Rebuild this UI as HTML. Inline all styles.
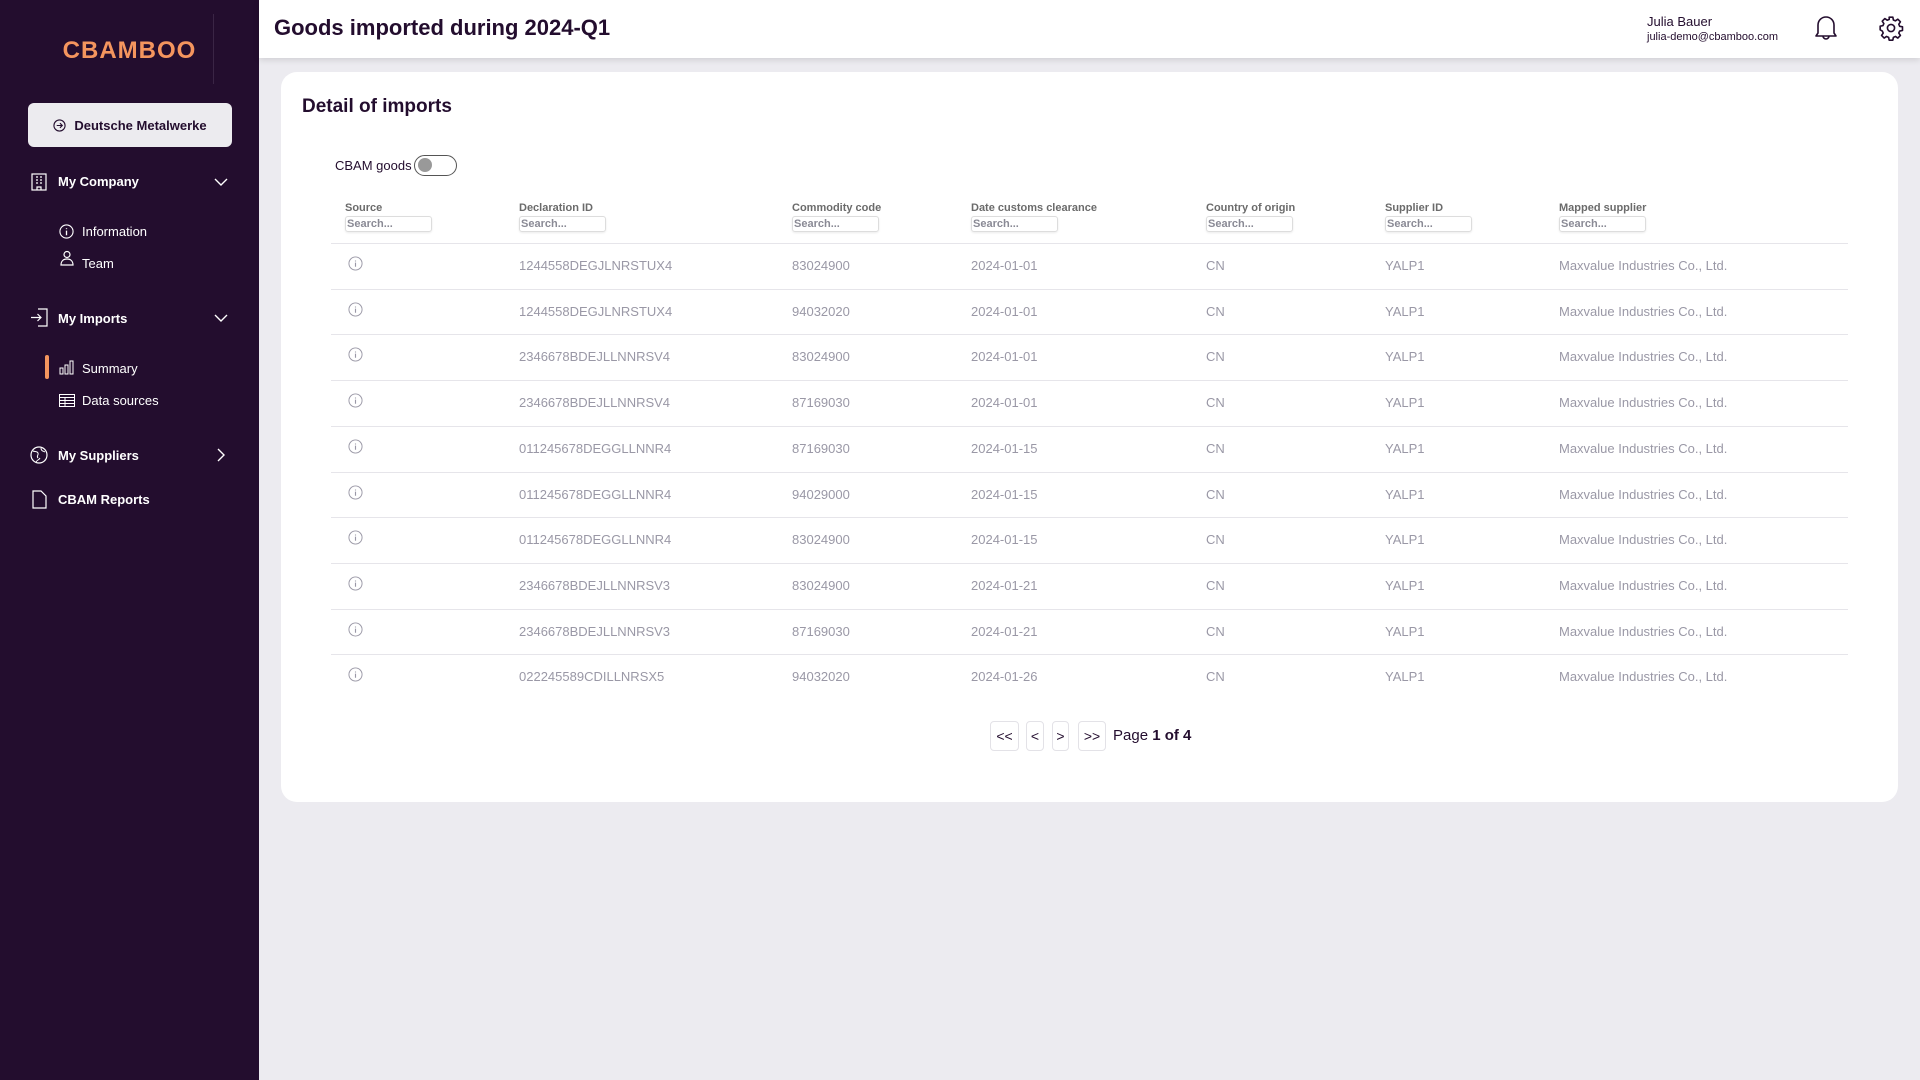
<!DOCTYPE html>
<html><head><meta charset="utf-8"><style>
*{box-sizing:border-box;margin:0;padding:0}
body{width:1920px;height:1080px;overflow:hidden;background:#ecebf0;font-family:"Liberation Sans",sans-serif;position:relative}
.sb{position:absolute;left:0;top:0;width:259px;height:1080px;background:#230d2e;color:#fff}
.logo{position:absolute;left:0;width:259px;top:37px;text-align:center;color:#f4955e;font-size:24px;font-weight:bold;letter-spacing:1px}
.vl{position:absolute;left:213px;top:14px;width:1px;height:70px;background:#3a2545}
.cbtn{position:absolute;left:28px;top:103px;width:204px;height:44px;background:#ecebef;border-radius:6px;color:#230d2e;font-size:13px;font-weight:bold;display:flex;align-items:center;justify-content:center;gap:8px}
.it{position:absolute;font-size:13px;color:#fff;display:flex;align-items:center}
.hdr{position:absolute;left:259px;top:0;right:0;height:58px;background:#fff;box-shadow:0 2px 6px rgba(0,0,0,0.12)}
.title{position:absolute;left:274px;top:15px;font-size:22px;font-weight:bold;color:#230d2e}
.card{position:absolute;left:281px;top:72px;width:1617px;height:730px;background:#fff;border-radius:16px}
.h2{position:absolute;left:302px;top:96px;font-size:19px;font-weight:bold;color:#230d2e}
.th{position:absolute;top:202px;font-size:11px;font-weight:bold;color:#6b6b6b}
.inp{position:absolute;top:216px;width:87px;height:16px;border:1px solid #ddd;border-radius:3px;font-size:11px;color:#8a8a95;font-weight:bold;padding-left:1px;line-height:14px;box-shadow:0 1px 2px rgba(0,0,0,.08)}
.line{position:absolute;left:331px;width:1517px;height:1px;background:#e6e5ea}
.td{position:absolute;font-size:13px;color:#9a98a6}
.pb{position:absolute;top:721px;height:30px;border:1px solid #e3e2e7;border-radius:4px;font-size:14px;color:#230d2e;display:flex;align-items:center;justify-content:center}
</style></head><body>
<div class="sb">
<div class="logo">CBAMBOO</div>
<div class="vl"></div>
<div class="cbtn"><svg width="13" height="13" viewBox="0 0 14 14"><circle cx="7" cy="7" r="6" fill="none" stroke="#230d2e" stroke-width="1.2"/><path d="M4 7h6M7.5 4.5L10 7l-2.5 2.5" fill="none" stroke="#230d2e" stroke-width="1.2"/></svg>Deutsche Metalwerke</div>

<div class="it" style="left:58px;top:174px;font-weight:bold">My Company</div>
<svg style="position:absolute;left:31px;top:173px" width="16" height="18" viewBox="0 0 16 18"><rect x="1" y="1" width="14" height="16" fill="none" stroke="#fff" stroke-width="1.2"/><path d="M5 4h2M9 4h2M5 7h2M9 7h2M5 10h2M9 10h2M6 17v-3h4v3" stroke="#fff" stroke-width="1.2" fill="none"/></svg>
<svg style="position:absolute;left:214px;top:178px" width="14" height="8" viewBox="0 0 14 8"><path d="M1 1l6 6 6-6" stroke="#fff" stroke-width="1.4" fill="none"/></svg>

<div class="it" style="left:82px;top:224px">Information</div>
<svg style="position:absolute;left:59px;top:224px" width="15" height="15" viewBox="0 0 16 16"><circle cx="8" cy="8" r="7" fill="none" stroke="#fff" stroke-width="1.2"/><path d="M8 7v5M8 4.5v1" stroke="#fff" stroke-width="1.4"/></svg>
<div class="it" style="left:82px;top:256px">Team</div>
<svg style="position:absolute;left:60px;top:250px" width="14" height="16" viewBox="0 0 14 16"><circle cx="7" cy="4.5" r="3" fill="none" stroke="#fff" stroke-width="1.2"/><path d="M1 15c0-4 2.5-6 6-6s6 2 6 6z" fill="none" stroke="#fff" stroke-width="1.2"/></svg>

<div class="it" style="left:58px;top:311px;font-weight:bold">My Imports</div>
<svg style="position:absolute;left:30px;top:308px" width="18" height="19" viewBox="0 0 18 19"><path d="M8 1h9v17H8M1 9.5h10M7.5 6l3.5 3.5-3.5 3.5" stroke="#fff" stroke-width="1.2" fill="none"/></svg>
<svg style="position:absolute;left:214px;top:314px" width="14" height="8" viewBox="0 0 14 8"><path d="M1 1l6 6 6-6" stroke="#fff" stroke-width="1.4" fill="none"/></svg>

<div style="position:absolute;left:45px;top:355px;width:4px;height:24px;background:#f4955e;border-radius:2px"></div>
<div class="it" style="left:82px;top:361px">Summary</div>
<svg style="position:absolute;left:59px;top:360px" width="16" height="15" viewBox="0 0 16 15"><rect x="1" y="8" width="3" height="6" fill="none" stroke="#fff"/><rect x="6" y="5" width="3" height="9" fill="none" stroke="#fff"/><rect x="11" y="1" width="3" height="13" fill="none" stroke="#fff"/></svg>
<div class="it" style="left:82px;top:393px">Data sources</div>
<svg style="position:absolute;left:59px;top:394px" width="16" height="13" viewBox="0 0 16 13"><rect x="0.5" y="0.5" width="15" height="12" fill="none" stroke="#fff"/><path d="M0.5 3.5h15M0.5 6.5h15M0.5 9.5h15M6 3.5v9" stroke="#fff"/></svg>

<div class="it" style="left:58px;top:448px;font-weight:bold">My Suppliers</div>
<svg style="position:absolute;left:30px;top:446px" width="18" height="18" viewBox="0 0 18 18"><circle cx="9" cy="9" r="8" fill="none" stroke="#fff" stroke-width="1.2"/><path d="M3 5c2 1 4 0 5 2s-2 3 0 5M11 2c0 3 2 3 4 4M6 16c1-2 3-2 4-4" stroke="#fff" fill="none"/></svg>
<svg style="position:absolute;left:217px;top:448px" width="8" height="14" viewBox="0 0 8 14"><path d="M1 1l6 6-6 6" stroke="#fff" stroke-width="1.4" fill="none"/></svg>

<div class="it" style="left:58px;top:492px;font-weight:bold">CBAM Reports</div>
<svg style="position:absolute;left:32px;top:490px" width="15" height="19" viewBox="0 0 15 19"><path d="M1 1h8l5 5v12H1z" fill="none" stroke="#fff" stroke-width="1.2"/></svg>
</div>

<div class="hdr"></div>
<div class="title">Goods imported during 2024-Q1</div>
<div style="position:absolute;left:1647px;top:14px;font-size:13px;color:#230d2e">Julia Bauer</div>
<div style="position:absolute;left:1647px;top:31px;font-size:11px;color:#230d2e">julia-demo@cbamboo.com</div>
<svg style="position:absolute;left:1814px;top:14px" width="24" height="27" viewBox="0 0 24 27"><path d="M4 19V11a8 8 0 0116 0v8l2 3H2z" fill="none" stroke="#230d2e" stroke-width="1.6" stroke-linejoin="round"/><path d="M9 22a3 3 0 006 0" fill="none" stroke="#230d2e" stroke-width="1.6"/></svg>
<svg style="position:absolute;left:1878px;top:15px" width="26" height="26" viewBox="0 0 24 24"><path d="M10.3 2h3.4l.5 2.6 1.9.8 2.2-1.5 2.4 2.4-1.5 2.2.8 1.9 2.6.5v3.4l-2.6.5-.8 1.9 1.5 2.2-2.4 2.4-2.200-1.5-1.9.8-.5 2.6h-3.4l-.5-2.6-1.9-.8-2.2 1.5-2.4-2.4 1.5-2.2-.8-1.9L2 13.7v-3.4l2.6-.5.8-1.9-1.5-2.2 2.4-2.4 2.2 1.5 1.9-.8z" fill="none" stroke="#230d2e" stroke-width="1.5" stroke-linejoin="round"/><circle cx="12" cy="12" r="3.3" fill="none" stroke="#230d2e" stroke-width="1.5"/></svg>

<div class="card"></div>
<div class="h2">Detail of imports</div>
<div style="position:absolute;left:335px;top:158px;font-size:13px;color:#230d2e">CBAM goods</div>
<div style="position:absolute;left:414px;top:155px;width:43px;height:21px;border:1.5px solid #555;border-radius:11px"><div style="position:absolute;left:3px;top:2px;width:14px;height:14px;border-radius:50%;background:#999"></div></div>

<div class="th" style="left:345px">Source</div><div class="inp" style="left:345px">Search...</div>
<div class="th" style="left:519px">Declaration ID</div><div class="inp" style="left:519px">Search...</div>
<div class="th" style="left:792px">Commodity code</div><div class="inp" style="left:792px">Search...</div>
<div class="th" style="left:971px">Date customs clearance</div><div class="inp" style="left:971px">Search...</div>
<div class="th" style="left:1206px">Country of origin</div><div class="inp" style="left:1206px">Search...</div>
<div class="th" style="left:1385px">Supplier ID</div><div class="inp" style="left:1385px">Search...</div>
<div class="th" style="left:1559px">Mapped supplier</div><div class="inp" style="left:1559px">Search...</div>

<div id="rows"></div>
<script>
var d=[["1244558DEGJLNRSTUX4","83024900","2024-01-01"],["1244558DEGJLNRSTUX4","94032020","2024-01-01"],["2346678BDEJLLNNRSV4","83024900","2024-01-01"],["2346678BDEJLLNNRSV4","87169030","2024-01-01"],["011245678DEGGLLNNR4","87169030","2024-01-15"],["011245678DEGGLLNNR4","94029000","2024-01-15"],["011245678DEGGLLNNR4","83024900","2024-01-15"],["2346678BDEJLLNNRSV3","83024900","2024-01-21"],["2346678BDEJLLNNRSV3","87169030","2024-01-21"],["022245589CDILLNRSX5","94032020","2024-01-26"]];
var h="";
d.forEach(function(r,i){var ly=243+45.7*i,ty=ly+15;
h+='<div class="line" style="top:'+ly+'px"></div>';
h+='<svg style="position:absolute;left:348px;top:'+(ty-2)+'px" width="15" height="15" viewBox="0 0 16 16"><circle cx="8" cy="8" r="7" fill="none" stroke="#9a98a6" stroke-width="1"/><path d="M8 7v4.5M8 4.8v1" stroke="#9a98a6" stroke-width="1.2"/></svg>';
h+='<div class="td" style="left:519px;top:'+ty+'px">'+r[0]+'</div><div class="td" style="left:792px;top:'+ty+'px">'+r[1]+'</div><div class="td" style="left:971px;top:'+ty+'px">'+r[2]+'</div><div class="td" style="left:1206px;top:'+ty+'px">CN</div><div class="td" style="left:1385px;top:'+ty+'px">YALP1</div><div class="td" style="left:1559px;top:'+ty+'px">Maxvalue Industries Co., Ltd.</div>';});
document.getElementById("rows").innerHTML=h;
</script>

<div class="pb" style="left:990px;width:29px">&lt;&lt;</div>
<div class="pb" style="left:1026px;width:18px">&lt;</div>
<div class="pb" style="left:1052px;width:17px">&gt;</div>
<div class="pb" style="left:1078px;width:28px">&gt;&gt;</div>
<div style="position:absolute;left:1113px;top:727px;font-size:15px;color:#230d2e">Page <b>1 of 4</b></div>
</body></html>
